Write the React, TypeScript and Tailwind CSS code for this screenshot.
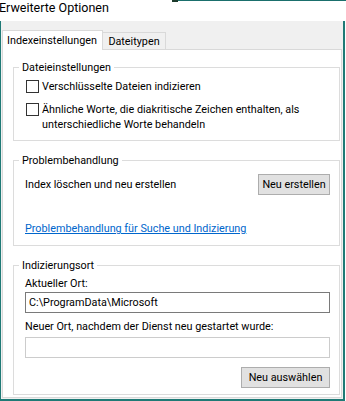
import React from 'react';

// Windows-Dialog "Erweiterte Optionen" (Indizierungsoptionen)

const font = { fontFamily: 'Roboto, "Noto Sans", sans-serif' };

const Checkbox: React.FC<{ className?: string }> = ({ className = '' }) => (
  <span className={`block w-[13px] h-[13px] shrink-0 bg-white border border-[#333333] ${className}`} />
);

const GroupBox: React.FC<{ title: string; className?: string; children: React.ReactNode }> = ({
  title,
  className = '',
  children,
}) => (
  <fieldset className={`border border-[#dcdcdc] p-0 m-0 min-w-0 ${className}`}>
    <legend className="ml-[5px] px-[3px] leading-[15px]">{title}</legend>
    {children}
  </fieldset>
);

export default function App() {
  return (
    <div className="w-[346px] h-[401px] bg-white flex flex-col text-[10.8px] text-black overflow-hidden whitespace-nowrap" style={font}>
      {/* Titelzeile */}
      <div className="h-[21px] flex items-start shrink-0">
        <div className="w-[173px] text-[12.5px] leading-[15px] -ml-[1px]">Erweiterte Optionen</div>
        <div className="w-[6px] h-[2px] bg-[#1d3b2c]" />
        <div className="flex-1 h-[1px] bg-[#1a6f6c]" />
      </div>

      {/* Dialogkörper */}
      <div className="w-[345px] h-[380px] bg-[#f0f0f0] border-l border-r-2 border-b-2 border-[#1f7a76] flex flex-col pl-[1px] pr-[1px] pb-[1px]">
        {/* Reiter */}
        <div className="flex items-end h-[28px] shrink-0">
          <div className="h-[20px] w-[101px] bg-white border border-b-0 border-[#d9d9d9] relative z-10 -mb-[1px] flex items-center pl-[4px] leading-[15px]">
            Indexeinstellungen
          </div>
          <div className="h-[17px] w-[63px] bg-[#f0f0f0] border border-l-0 border-b-0 border-[#d9d9d9] flex items-center justify-center leading-[15px]">
            Dateitypen
          </div>
        </div>

        {/* Reiterinhalt */}
        <div className="flex-1 bg-white border border-[#d9d9d9] pl-[10px] pr-[1px] pt-[10px] flex flex-col">
          <GroupBox title="Dateieinstellungen">
            <div className="pl-[12px] pt-[4px] pb-[8px] flex flex-col gap-[8px] leading-[15px]">
              <div className="flex items-start gap-[3px]">
                <Checkbox className="mt-[1px]" />
                <span>Verschlüsselte Dateien indizieren</span>
              </div>
              <div className="flex items-start gap-[3px]">
                <Checkbox className="mt-[1px]" />
                <span>
                  Ähnliche Worte, die diakritische Zeichen enthalten, als
                  <br />
                  unterschiedliche Worte behandeln
                </span>
              </div>
            </div>
          </GroupBox>

          <GroupBox title="Problembehandlung" className="mt-[12px]">
            <div className="pl-[11px] pr-[9px] pt-[6px] pb-[9px] leading-[15px]">
              <div className="flex items-center justify-between h-[21px]">
                <span>Index löschen und neu erstellen</span>
                <button className="w-[72px] h-[21px] bg-[#e1e1e1] border border-[#adadad] leading-[15px]">
                  Neu erstellen
                </button>
              </div>
              <a className="block mt-[26px] text-[#0066cc] underline w-fit">
                Problembehandlung für Suche und Indizierung
              </a>
            </div>
          </GroupBox>

          <GroupBox title="Indizierungsort" className="mt-[12px]">
            <div className="pl-[11px] pr-[9px] pt-[3px] pb-[6px] leading-[15px] flex flex-col">
              <span>Aktueller Ort:</span>
              <div className="mt-[1px] h-[21px] border border-[#7a7a7a] bg-white flex items-center pl-[3px]">
                C:\ProgramData\Microsoft
              </div>
              <span className="mt-[6px]">Neuer Ort, nachdem der Dienst neu gestartet wurde:</span>
              <div className="mt-[3px] h-[21px] border border-[#cccccc] bg-white" />
              <div className="flex justify-end mt-[9px]">
                <button className="w-[89px] h-[21px] bg-[#e1e1e1] border border-[#adadad] leading-[15px]">
                  Neu auswählen
                </button>
              </div>
            </div>
          </GroupBox>
        </div>
      </div>
    </div>
  );
}
